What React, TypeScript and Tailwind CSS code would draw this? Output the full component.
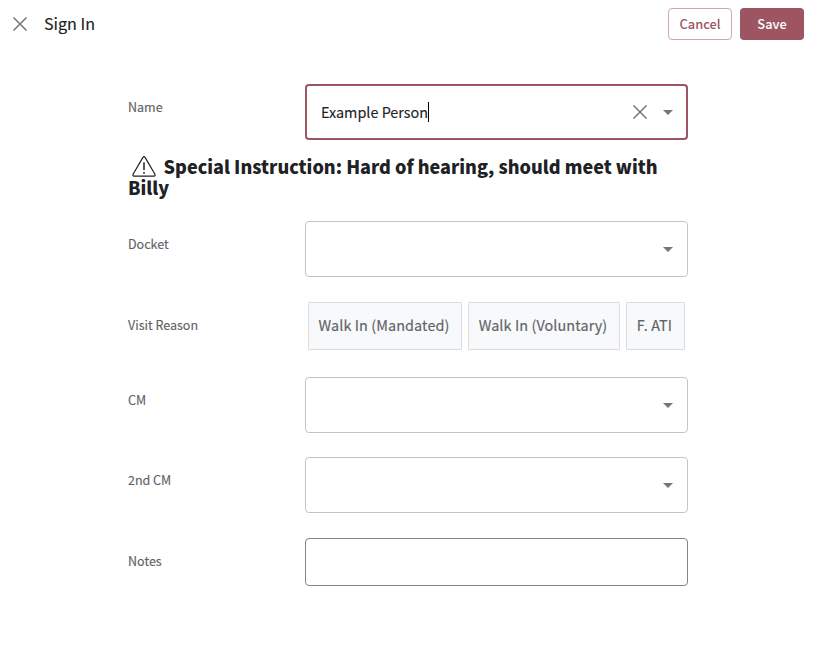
import React from "react";

function Caret() {
  return (
    <svg width="24" height="24" viewBox="0 0 24 24" className="shrink-0 fill-[#757575]">
      <path d="M7 10l5 5 5-5z" />
    </svg>
  );
}

function CloseIcon({ className }: { className: string }) {
  return (
    <svg width="14" height="14" viewBox="0 0 14 14" className={className} fill="none" strokeWidth="1.5">
      <path d="M0.5 0.5L13.5 13.5M13.5 0.5L0.5 13.5" />
    </svg>
  );
}

function Label({ children }: { children: string }) {
  return <div className="w-[177px] shrink-0 pt-[13px] text-[12.5px] leading-5 text-[#5f6368] [-webkit-text-stroke:0.15px_#5f6368]">{children}</div>;
}

function Select() {
  return (
    <div className="flex h-14 flex-1 items-center justify-end rounded-[4px] border border-[#c4c4c4] pr-[7px]">
      <Caret />
    </div>
  );
}

export default function App() {
  return (
    <div className="h-[648px] w-[813px] overflow-hidden bg-white font-['Noto_Sans_CJK_SC',sans-serif] text-[#202124]">
      <header className="flex h-12 items-center pr-[9px] pl-[13px]">
        <CloseIcon className="stroke-[#757575]" />
        <h1 className="ml-[17px] flex-1 pb-0.5 text-[16.1px] leading-6 [-webkit-text-stroke:0.15px_#202124]">Sign In</h1>
        <button className="h-8 w-16 rounded-[4px] border border-[#cfa5ae] text-[12.8px] font-medium text-[#9c5561]">Cancel</button>
        <button className="ml-2 h-8 w-16 rounded-[4px] bg-[#9c5561] text-[12.8px] font-medium text-white">Save</button>
      </header>
      <main className="ml-32 w-[560px] pt-9">
        <div className="flex">
          <Label>Name</Label>
          <div className="flex h-14 flex-1 items-center rounded-[4px] border-2 border-[#9c5561] pr-[6px] pl-[14px]">
            <span className="text-[14.4px] leading-5 [-webkit-text-stroke:0.1px_#202124]">Example Person</span>
            <span className="h-5 w-px bg-black" />
            <span className="flex-1" />
            <CloseIcon className="mr-[9px] stroke-[#757575]" />
            <Caret />
          </div>
        </div>
        <h2 className="mt-4 h-[42px] text-[18px] leading-[21px] font-black">
          <svg width="24" height="22" viewBox="0 0 24 22" className="-mt-1 -mb-1 mr-2 ml-[3.6px] inline-block align-baseline" fill="none" stroke="#202124" strokeWidth="1.2" strokeLinejoin="round">
            <path d="M10.8 1.6Q12 -0.2 13.2 1.6L22.8 18Q23.6 20.2 22 20.2H2Q0.4 20.2 1.2 18Z" />
            <path d="M12 6.2V14M12 16V17.8" strokeWidth="1.5" />
          </svg>
          Special Instruction: Hard of hearing, should meet with Billy
        </h2>
        <div className="mt-[23px] flex">
          <Label>Docket</Label>
          <Select />
        </div>
        <div className="mt-[25px] flex h-12">
          <Label>Visit Reason</Label>
          <div className="ml-[3px] flex gap-[6px] text-[14.4px] tracking-[0.1px] text-[#5f6368] [-webkit-text-stroke:0.15px_#5f6368]">
            <button className="h-12 w-[154px] rounded-[1px] border border-[#dadce0] bg-[#f8f9fa] pr-[2px] pb-[3px]">Walk In (Mandated)</button>
            <button className="h-12 w-[152px] rounded-[1px] border border-[#dadce0] bg-[#f8f9fa] pr-[2px] pb-[3px]">Walk In (Voluntary)</button>
            <button className="h-12 w-[59px] rounded-[1px] border border-[#dadce0] bg-[#f8f9fa] pr-[2px] pb-[3px]">F. ATI</button>
          </div>
        </div>
        <div className="mt-[27px] flex">
          <Label>CM</Label>
          <Select />
        </div>
        <div className="mt-6 flex">
          <Label>2nd CM</Label>
          <Select />
        </div>
        <div className="mt-[25px] flex">
          <Label>Notes</Label>
          <div className="h-12 flex-1 rounded-[4px] border border-[#80868b]" />
        </div>
      </main>
    </div>
  );
}
